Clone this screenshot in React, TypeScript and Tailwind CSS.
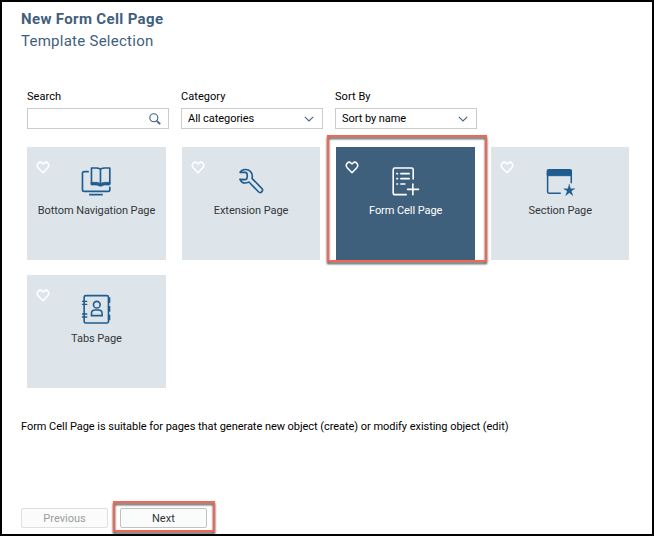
import type { ReactNode } from "react";

function Heart() {
  return (
    <svg className="absolute left-[9px] top-[13.5px] h-[13px] w-[14px]" viewBox="0 0 42 39" fill="none" stroke="white" strokeWidth="4.5" strokeLinejoin="round">
      <path d="M21 35 L6.5 20 C-1 10 10 -1 18 6 L21 9 L24 6 C32 -1 43 10 35.5 20 Z" />
    </svg>
  );
}

function BookIcon() {
  return (
    <svg className="h-[30px] w-[30px] shrink-0" viewBox="184.6 78 90 90" fill="none" stroke="#1f5c8f" strokeWidth="5" strokeLinecap="round" strokeLinejoin="round">
      <path d="M206 95 H194 Q189 95 189 100 V149 Q189 154 194 154 H266 Q271 154 271 149 V142" />
      <path d="M211 164 H248" />
      <path d="M216 84 H231 Q243 84 243 91 Q243 84 255 84 H271 V132 H256 Q247 132 243 136 Q239 132 231 132 H216 Z M243 91 V133" />
      <path d="M216 127 H232 Q239 127 243 132 Q247 127 256 127 H271 V135 H255 L243 139 L231 135 H216 Z" fill="#1f5c8f" strokeWidth="2" />
    </svg>
  );
}

function WrenchIcon() {
  return (
    <svg className="h-[30px] w-[30px] shrink-0" viewBox="183.1 78 90 90" fill="none" stroke="#1f5c8f" strokeWidth="4.8" strokeLinejoin="round">
      <path d="M195 97 C201 86 219 86 226 94 C233 101 233 109 231 115 L261 146 Q265 150 261 155 Q256 160 251 156 L222 126 C211 131 200 129 195 118 L211 119 Q217 119 217 108 Q217 97 211 97 Z" />
    </svg>
  );
}

function FormIcon() {
  return (
    <svg className="h-[30px] w-[30px] shrink-0" viewBox="206.4 108 90 90" fill="none" stroke="white" strokeWidth="4.8" strokeLinecap="round" strokeLinejoin="round">
      <path d="M273 147 V119 Q273 114 268 114 H218 Q213 114 213 119 V188 Q213 194 218 194 H252" />
      <path d="M224 131 H226 M224 146 H226 M224 162 H226 M236 131 H261 M236 146 H261 M236 162 H248 M272 162 V194 M256 178 H289" />
    </svg>
  );
}

function SectionIcon() {
  return (
    <svg className="h-[30px] w-[30px] shrink-0" viewBox="183.2 78 90 90" fill="none" stroke="#1f5c8f" strokeWidth="4.6" strokeLinecap="round" strokeLinejoin="round">
      <path d="M262 128 V94 Q262 89 257 89 H196 Q191 89 191 94 V155 Q191 160 196 160 H229" />
      <path d="M191 90 H262 V107 H191 Z" fill="#1f5c8f" strokeWidth="3" />
      <path d="M256 133 L260 146 H273 L262 153 L267 167 L256 158 L245 167 L250 153 L239 146 H252 Z" fill="#1f5c8f" strokeWidth="1" />
    </svg>
  );
}

function TabsIcon() {
  return (
    <svg className="h-[30px] w-[30px] shrink-0" viewBox="184.6 72 90 90" fill="none" stroke="#1f5c8f" strokeWidth="4.8" strokeLinecap="round" strokeLinejoin="round">
      <path d="M199 77 H262 Q267 77 267 82 V153 Q267 159 262 159 H199 Q194 159 194 153 V82 Q194 77 199 77 Z" />
      <path d="M189 94 H202 M189 103 H202 M189 132 H202 M189 141 H202" strokeWidth="4" />
      <path d="M269 82 V99 M269 108 V125 M269 134 V151" strokeWidth="7" strokeLinecap="butt" />
      <circle cx="232" cy="104" r="10" />
      <path d="M216 137 V131 Q216 120 227 120 H237 Q248 120 248 131 V137 Z" strokeLinejoin="miter" />
    </svg>
  );
}

function Highlight({ className }: { className: string }) {
  return <div className={`pointer-events-none absolute border-2 border-[#f06755] drop-shadow-[0_2px_1px_rgba(0,0,0,0.75)] ${className}`} />;
}

interface TileProps {
  label: string;
  icon: ReactNode;
  selected?: boolean;
}

function Tile({ label, icon, selected }: TileProps) {
  return (
    <div className={`relative flex h-[113px] flex-col items-center pt-[18.7px] ${selected ? "bg-[#3f607c] text-white" : "bg-[#dee5ea] text-[#32363a]"}`}>
      <Heart />
      {icon}
      <span className="mt-[7px] text-[11px] leading-4 tracking-[-0.07px] whitespace-nowrap">{label}</span>
      {selected && <Highlight className="-left-[9.5px] -top-[12.3px] h-[127px] w-[160px]" />}
    </div>
  );
}

function Chevron() {
  return (
    <svg className="h-[6px] w-[10px]" viewBox="0 0 10 6" fill="none" stroke="#49657f" strokeWidth="1.1">
      <path d="M0.8 0.8 L5 5 L9.2 0.8" />
    </svg>
  );
}

function Field({ label, children }: { label: string; children: ReactNode }) {
  return (
    <div className="flex w-[142px] flex-col gap-[3px]">
      <label className="h-4 text-[11px] leading-4 tracking-[0.05px]">{label}</label>
      <div className="flex h-[21px] items-center justify-between border border-[#cbcbcb] pl-[6px] pr-[8px] text-[11px] leading-4 tracking-[-0.05px]">{children}</div>
    </div>
  );
}

export default function App() {
  return (
    <div className="flex h-[536px] w-[654px] flex-col overflow-hidden border-2 border-black bg-white font-['Roboto','Liberation_Sans',sans-serif] text-black">
      <header className="flex flex-col pl-[19px] pt-[6px] text-[#3f607c]">
        <h1 className="h-[22px] text-[15px] font-bold leading-[22px] tracking-[0.35px]">New Form Cell Page</h1>
        <h2 className="h-[22px] text-[15px] leading-[22px] tracking-[0.26px]">Template Selection</h2>
      </header>

      <section className="mt-[37px] flex gap-[12px] pl-[25px]">
        <Field label="Search">
          <span />
          <svg className="-mr-[1px] h-[12px] w-[12px]" viewBox="0 0 12 12" fill="none" stroke="#3f607c">
            <circle cx="4.8" cy="4.8" r="4" strokeWidth="1.1" />
            <path d="M7.8 7.8 L11.2 11.2" strokeWidth="1.7" />
          </svg>
        </Field>
        <Field label="Category">
          <span className="pt-px">All categories</span>
          <Chevron />
        </Field>
        <Field label="Sort By">
          <span className="pt-px">Sort by name</span>
          <Chevron />
        </Field>
      </section>

      <main className="mt-[18.3px] grid grid-cols-[repeat(4,138.4px)] gap-x-[16.2px] gap-y-[15px] pl-[25.3px]">
        <Tile label="Bottom Navigation Page" icon={<BookIcon />} />
        <Tile label="Extension Page" icon={<WrenchIcon />} />
        <Tile label="Form Cell Page" icon={<FormIcon />} selected />
        <Tile label="Section Page" icon={<SectionIcon />} />
        <Tile label="Tabs Page" icon={<TabsIcon />} />
      </main>

      <p className="mt-[31px] pl-[19px] text-[11px] leading-4 tracking-[-0.045px]">
        Form Cell Page is suitable for pages that generate new object (create) or modify existing object (edit)
      </p>

      <footer className="mt-[72.4px] flex gap-[12.4px] pl-[19.3px] text-[11px]">
        <button disabled className="h-5 w-[86.4px] rounded-[2px] border border-[#dedfe0] bg-[#fbfbfb] pt-[2px] leading-4 text-[#999b9d]">Previous</button>
        <div className="relative">
          <button className="h-5 w-[86.6px] rounded-[2px] border border-[#bfc1c3] bg-[#fafbfb] pt-[2px] leading-4 text-[#32363a]">Next</button>
          <Highlight className="-left-[7px] -top-[7px] h-[31.4px] w-[102px]" />
        </div>
      </footer>
    </div>
  );
}
